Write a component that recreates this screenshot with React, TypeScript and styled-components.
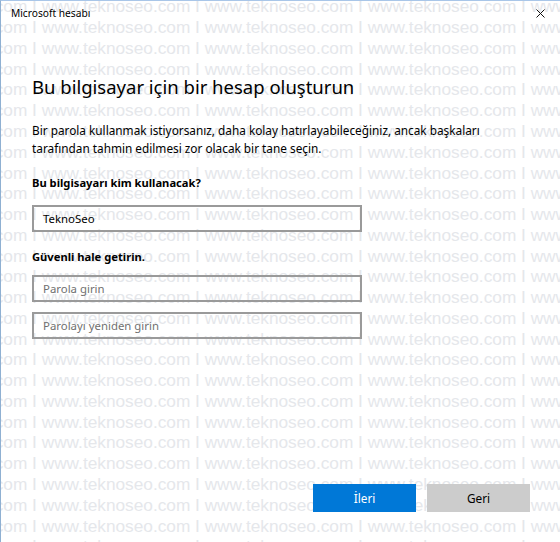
import React from "react";
import styled, { createGlobalStyle } from "styled-components";

const GlobalStyle = createGlobalStyle`
  html, body {
    margin: 0;
    padding: 0;
    background: #ffffff;
    overflow: hidden;
  }
`;

const UI_FONT = `"Noto Sans", "Open Sans", sans-serif`;

const Window = styled.div`
  position: relative;
  width: 560px;
  height: 542px;
  box-sizing: border-box;
  border-top: 1px solid #a9c6e8;
  border-left: 1px solid #8fb0d2;
  display: flex;
  flex-direction: column;
  font-family: ${UI_FONT};
  color: #000;
  overflow: hidden;
`;

const Layer = styled.div`
  position: relative;
  z-index: 1;
  display: flex;
  flex-direction: column;
  flex: 1;
`;

const TitleBar = styled.div`
  display: flex;
  justify-content: space-between;
  align-items: flex-start;
  height: 30px;
  padding: 4px 15px 0 10px;
  box-sizing: border-box;
`;

const Title = styled.span`
  font-size: 10.2px;
  line-height: 16px;
`;

const CloseGlyph = styled.svg`
  margin-top: 4px;
`;

const Body = styled.div`
  display: flex;
  flex-direction: column;
  align-items: flex-start;
  padding-left: 31px;
`;

const Heading = styled.h1`
  margin: 43px 0 0;
  font-size: 18.5px;
  line-height: 26px;
  font-weight: 400;
`;

const Intro = styled.p`
  margin: 21px 0 0;
  font-size: 11.8px;
  line-height: 18px;
`;

const FieldLabel = styled.div<{ $gap: number }>`
  margin-top: ${(p) => p.$gap}px;
  font-size: 11.2px;
  line-height: 18px;
  font-weight: 700;
`;

const TextBox = styled.div<{ $gap: number; $empty?: boolean }>`
  margin-top: ${(p) => p.$gap}px;
  width: 330px;
  height: 27px;
  box-sizing: border-box;
  border: 2px solid #9a9a9a;
  padding: 0 9px;
  display: flex;
  align-items: center;
  font-size: 11.4px;
  color: ${(p) => (p.$empty ? "#707070" : "#000")};
`;

const Footer = styled.div`
  margin-top: auto;
  display: flex;
  justify-content: flex-end;
  gap: 11px;
  padding: 0 30px 30px 0;
`;

const Button = styled.div<{ $primary?: boolean }>`
  width: 103px;
  height: 28px;
  display: flex;
  align-items: center;
  justify-content: center;
  font-size: 11.8px;
  background: ${(p) => (p.$primary ? "#0078d7" : "#cccccc")};
  color: ${(p) => (p.$primary ? "#ffffff" : "#000000")};
`;

const Watermark = styled.div`
  position: absolute;
  inset: 0;
  z-index: 0;
  pointer-events: none;
  margin-top: -4.6px;
  margin-left: -122.3px;
`;

const WatermarkRow = styled.div`
  white-space: nowrap;
  font-family: "Liberation Sans", Arial, sans-serif;
  font-size: 17.26px;
  line-height: 20.76px;
  color: #e5e7eb;
`;

const rows = Array.from({ length: 28 }, (_, i) => i);
const stamp = "www.teknoseo.com I ".repeat(6);

export default function App() {
  return (
    <>
      <GlobalStyle />
      <Window>
        <Watermark>
          {rows.map((i) => (
            <WatermarkRow key={i}>{stamp}</WatermarkRow>
          ))}
        </Watermark>
        <Layer>
          <TitleBar>
            <Title>Microsoft hesabı</Title>
            <CloseGlyph width="9" height="9" viewBox="0 0 9 9">
              <path d="M0.5 0.5 L8.5 8.5 M8.5 0.5 L0.5 8.5" stroke="#111" strokeWidth="1" fill="none" />
            </CloseGlyph>
          </TitleBar>
          <Body>
            <Heading>Bu bilgisayar için bir hesap oluşturun</Heading>
            <Intro>
              Bir parola kullanmak istiyorsanız, daha kolay hatırlayabileceğiniz, ancak başkaları
              <br />
              tarafından tahmin edilmesi zor olacak bir tane seçin.
            </Intro>
            <FieldLabel $gap={17}>Bu bilgisayarı kim kullanacak?</FieldLabel>
            <TextBox $gap={13}>TeknoSeo</TextBox>
            <FieldLabel $gap={16}>Güvenli hale getirin.</FieldLabel>
            <TextBox $gap={9} $empty>Parola girin</TextBox>
            <TextBox $gap={10} $empty>Parolayı yeniden girin</TextBox>
          </Body>
          <Footer>
            <Button $primary>İleri</Button>
            <Button>Geri</Button>
          </Footer>
        </Layer>
      </Window>
    </>
  );
}
